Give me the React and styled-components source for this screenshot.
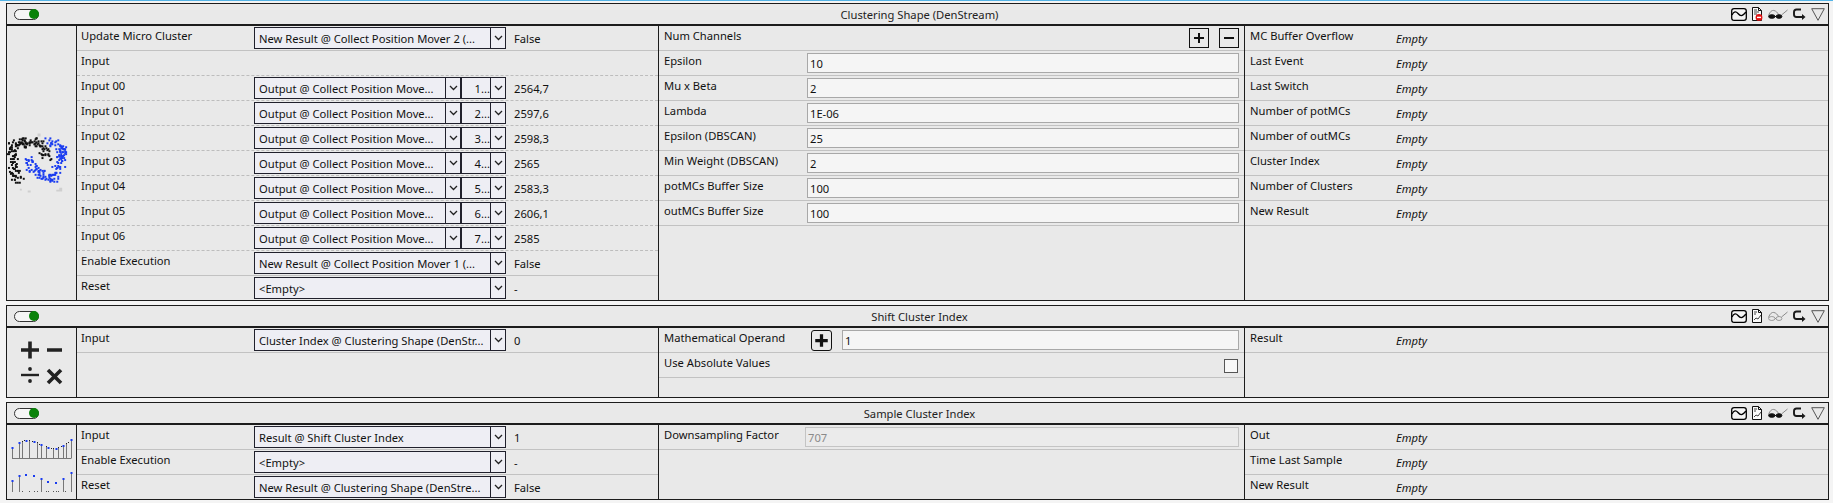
import React from 'react';
import styled, { createGlobalStyle } from 'styled-components';

const GlobalStyle = createGlobalStyle`
  html, body {
    margin: 0;
    padding: 0;
    background: #f4f4f4;
    font-family: "Noto Sans", "Liberation Sans", sans-serif;
    font-size: 11.2px;
    color: #111;
  }
`;

const Page = styled.div`
  width: 1833px;
  height: 503px;
  overflow: hidden;
  border-top: 1px solid #55b4e6;
  box-sizing: border-box;
  padding: 2px 5px 0 6px;
`;

const Panel = styled.section`
  width: 1823px;
  box-sizing: border-box;
  border: 1px solid #1c1c1c;
  background: #e9e9e9;
  margin-bottom: 4px;
`;

const PanelHeader = styled.header`
  height: 20px;
  border-bottom: 2px solid #1c1c1c;
  display: grid;
  grid-template-columns: 1fr auto 1fr;
  align-items: center;
  padding: 0 3px 0 7px;
`;

const Toggle = styled.span`
  width: 25px;
  height: 11px;
  box-sizing: border-box;
  border: 1px solid #333;
  border-radius: 6px;
  background: #f6f6f6;
  display: flex;
  justify-content: flex-end;
  align-items: center;
  &::after {
    content: '';
    width: 10px;
    height: 10px;
    margin-right: -1px;
    border-radius: 50%;
    background: #0a820a;
  }
`;

const Title = styled.span`
  color: #222;
`;

const HeaderIcons = styled.div`
  display: flex;
  justify-content: flex-end;
  align-items: center;
  gap: 5px;
`;

const Body = styled.div`
  display: grid;
  grid-template-columns: 70px 582px 586px 583px;
  height: ${p => p.$height}px;
  overflow: hidden;
`;

const IconCell = styled.div`
  border-right: 1px solid #1c1c1c;
  display: flex;
  align-items: center;
  justify-content: center;
`;

const Column = styled.div`
  border-right: ${p => (p.$last ? 'none' : '1px solid #1c1c1c')};
`;

const Row = styled.div`
  height: 25px;
  box-sizing: border-box;
  border-bottom: 1px ${p => p.$line || 'solid'} ${p => (p.$line === 'dashed' ? '#bdbdbd' : '#c2c2c2')};
  display: flex;
  align-items: flex-start;
  padding-left: ${p => p.$inset || 4}px;
`;

const Label = styled.span`
  flex: none;
  width: ${p => p.$width}px;
  line-height: 16px;
  margin-top: 2px;
  white-space: nowrap;
`;

const SelectBox = styled.div`
  width: ${p => p.$width}px;
  height: 22px;
  margin-top: 1px;
  box-sizing: border-box;
  flex: none;
  border: 1px solid #20202c;
  background: #eeeef4;
  display: flex;
  align-items: center;
`;

const SelectText = styled.span`
  flex: 1;
  min-width: 0;
  padding: 0 ${p => (p.$right ? '0' : '4px')};
  text-align: ${p => (p.$right ? 'right' : 'left')};
  white-space: nowrap;
  overflow: hidden;
`;

const SelectArrow = styled.span`
  flex: none;
  width: 14px;
  height: 20px;
  border-left: 1px solid #20202c;
  display: flex;
  align-items: center;
  justify-content: center;
`;

const Value = styled.span`
  line-height: 16px;
  margin: 5px 0 0 8px;
`;

const EmptyValue = styled.span`
  line-height: 16px;
  margin-top: 5px;
  font-style: italic;
`;

const TextInput = styled.div`
  flex: 1;
  height: 20px;
  margin: 2px 5px 0 0;
  box-sizing: border-box;
  border: 1px solid ${p => (p.$disabled ? '#c4c4c4' : '#a8a8a8')};
  background: ${p => (p.$disabled ? '#ebebeb' : '#f5f5f5')};
  color: ${p => (p.$disabled ? '#8a8a8a' : '#111')};
  padding: 1px 2px 0;
  line-height: 17px;
`;

const SquareButton = styled.span`
  flex: none;
  width: ${p => (p.$round ? 21 : 20)}px;
  height: ${p => (p.$round ? 21 : 20)}px;
  box-sizing: border-box;
  border: 1px solid #111;
  border-radius: ${p => (p.$round ? 3 : 0)}px;
  display: flex;
  align-items: center;
  justify-content: center;
  margin: ${p => (p.$round ? '2px 10px 0 4px' : '2px 0 0 0')};
`;

const ButtonGroup = styled.div`
  display: flex;
  gap: 10px;
  margin: 0 5px 0 auto;
`;

const Checkbox = styled.span`
  width: 14px;
  height: 14px;
  box-sizing: border-box;
  border: 1px solid #555;
  background: #f8f8f8;
  margin: 6px 6px 0 auto;
`;

// --- drawings ---

const Chevron = () => (
  <svg width="9" height="6" viewBox="0 0 9 6">
    <path d="M1 1l3.5 3.5L8 1" fill="none" stroke="#222" strokeWidth="1.3" />
  </svg>
);

const Glyph = ({ minus, size = 12, width = 2 }) => (
  <svg width={size} height={size} viewBox="0 0 12 12">
    <path d={minus ? 'M1 6h10' : 'M1 6h10M6 1v10'} stroke="#111" strokeWidth={width} />
  </svg>
);

const WaveIcon = () => (
  <svg width="16" height="13" viewBox="0 0 16 13">
    <rect x="0.7" y="0.7" width="14.6" height="11.6" rx="2.4" fill="#f4f4f4" stroke="#000" strokeWidth="1.3" />
    <path d="M1 7c2-4 4-4 6-1.5s4 3.500 8-1.500" fill="none" stroke="#000" strokeWidth="1.3" />
  </svg>
);

const DocIcon = ({ stop }) => (
  <svg width="11" height="14" viewBox="0 0 11 14">
    <path d="M.5.5h6l3 3v10h-9z" fill="#fafafa" stroke="#111" />
    <path d="M6.5.5v3h3" fill="none" stroke="#111" />
    {stop ? (
      <>
        <path d="M2 3h3M2 5h5M2 7h3" stroke="#444" />
        <circle cx="7" cy="10.4" r="3.4" fill="#e01010" />
        <path d="M5 10.4h4" stroke="#fff" strokeWidth="1.4" />
      </>
    ) : (
      <>
        <path d="M2 3h3M2 5h2" stroke="#444" />
        <path d="M2 11l2-2 2 1 3-4" fill="none" stroke="#444" />
      </>
    )}
  </svg>
);

const GlassesIcon = ({ dark }) => {
  const lens = dark ? '#111' : '#8a8a8a';
  return (
    <svg width="20" height="10" viewBox="0 0 20 10">
      <path d="M.5 6.500C2 2.500 4 1 6 1.500s3.500 2 4.500 4M13.500 6l6-5" fill="none" stroke="#8a8a8a" />
      <path d="M7 7.500h1" stroke={lens} />
      <ellipse cx="3.800" cy="7.500" rx="3.200" ry={dark ? 1.800 : 2} fill={dark ? lens : 'none'} stroke={lens} strokeWidth={dark ? 1 : 0.8} />
      <ellipse cx="11" cy="7.500" rx="2.900" ry={dark ? 1.800 : 2} fill={dark ? lens : 'none'} stroke={lens} strokeWidth={dark ? 1 : 0.8} />
    </svg>
  );
};

const ReturnIcon = () => (
  <svg width="13" height="13" viewBox="0 0 13 13">
    <path d="M8 1.500H3.500Q1 1.500 1 4v2.500Q1 9 3.500 9H9.500" fill="none" stroke="#1a1a1a" strokeWidth="1.900" />
    <path d="M9 6l3.500 3L9 12z" fill="#1a1a1a" />
  </svg>
);

const TriangleIcon = () => (
  <svg width="14" height="13" viewBox="0 0 14 13">
    <path d="M.7.7h12.600L7 12.300z" fill="none" stroke="#555" />
  </svg>
);

// seeded so the specks stay the same on every render
const scatter = (points, count, spread, seed) => {
  let s = seed;
  const rnd = () => {
    s = (s * 16807) % 2147483647;
    return s / 2147483647;
  };
  const out = [];
  for (let i = 0; i < count; i++) {
    const t = (i / count) * (points.length - 1);
    const k = Math.floor(t);
    const f = t - k;
    const [ax, ay] = points[k];
    const [bx, by] = points[k + 1];
    out.push([
      Math.round(ax + (bx - ax) * f + (rnd() - 0.5) * spread),
      Math.round(ay + (by - ay) * f + (rnd() - 0.5) * spread),
    ]);
  }
  return out;
};

const blackDots = scatter(
  [[13, 50], [7, 42], [3, 25], [7, 15], [16, 12], [25, 12], [35, 17], [40, 27]],
  150, 10, 77
);
const blueDots = scatter(
  [[43, 10], [53, 17], [56, 25], [53, 35], [46, 49], [35, 45], [25, 39], [21, 29]],
  150, 10, 1234
);

const ClusterIcon = () => (
  <svg width="70" height="70" viewBox="0 0 70 70">
    {blackDots.map(([x, y], i) => <rect key={i} x={x} y={y} width="2" height="2" fill="#111" />)}
    {blueDots.map(([x, y], i) => <rect key={i} x={x} y={y} width="2" height="2" fill="#1a3cf0" />)}
    <path d="M31 4h3v3h-3zM13 60h2v2h-2zM21 62h3v2h-3zM50 61h3v2h-3zM53 59h3v4h-3z" fill="#cfcfcf" />
  </svg>
);

const MathIcon = () => (
  <svg width="69" height="69" viewBox="0 0 69 69">
    <path d="M14 22h18M23 13.500v17M40 22h15" stroke="#222" strokeWidth="3.600" />
    <path d="M14 47h18" stroke="#222" strokeWidth="2.400" />
    <circle cx="23" cy="41" r="1.900" fill="#222" />
    <circle cx="23" cy="53" r="1.900" fill="#222" />
    <path d="M41 42l13 13M54 42L41 55" stroke="#222" strokeWidth="3.600" />
  </svg>
);

const topStems = [[5, 22], [12, 17], [15, 16], [22, 15], [30, 17], [34, 19], [39, 21], [46, 23], [51, 22], [56, 20], [59, 18], [64, 14]];
const topBlue = [[5, 22], [12, 17], [19, 15], [27, 16], [34, 19], [41, 22], [49, 23], [56, 20], [64, 14]];
const topBlack = [[15, 16], [17, 15], [22, 15], [25, 16], [30, 17], [32, 19], [39, 21], [44, 23], [46, 23], [51, 22], [54, 21], [59, 18], [61, 17]];
const lowStems = [[5, 55], [12, 50], [34, 53], [56, 53], [64, 47]];
const lowBlue = [[19, 49], [27, 50], [41, 56], [49, 57]];

const SampleIcon = () => (
  <svg width="69" height="74" viewBox="0 0 69 74">
    <path d="M5 32.500h59.500" stroke="#777" />
    {topStems.map(([x, y]) => <path key={x} d={`M${x + 0.5} ${y}V32`} stroke="#777" />)}
    {topBlack.map(([x, y]) => <rect key={x} x={x} y={y - 1} width="1" height="1" fill="#222" />)}
    {topBlue.map(([x, y]) => <rect key={x} x={x - 0.5} y={y - 1} width="2" height="2" fill="#1a3cf0" />)}
    {lowStems.map(([x, y]) => (
      <g key={x}>
        <path d={`M${x + 0.5} ${y}V66`} stroke="#777" />
        <rect x={x - 0.5} y={y - 1} width="2" height="2" fill="#1a3cf0" />
      </g>
    ))}
    {lowBlue.map(([x, y]) => <rect key={x} x={x - 1} y={y - 1} width="2" height="2" fill="#1a3cf0" />)}
    {[15, 22, 27, 30, 39, 41, 46, 49, 51, 58].map(x => <rect key={x} x={x} y="65" width="1" height="1" fill="#555" />)}
  </svg>
);

// --- parts ---

const Select = ({ width = 252, right, children }) => (
  <SelectBox $width={width}>
    <SelectText $right={right}>{children}</SelectText>
    <SelectArrow><Chevron /></SelectArrow>
  </SelectBox>
);

const Header = ({ title, stop, darkGlasses }) => (
  <PanelHeader>
    <Toggle />
    <Title>{title}</Title>
    <HeaderIcons>
      <WaveIcon />
      <DocIcon stop={stop} />
      <GlassesIcon dark={darkGlasses} />
      <ReturnIcon />
      <TriangleIcon />
    </HeaderIcons>
  </PanelHeader>
);

const InputRow = ({ label, source, value, line }) => (
  <Row $line={line}>
    <Label $width={173}>{label}</Label>
    <Select>{source}</Select>
    <Value>{value}</Value>
  </Row>
);

const ChannelRow = ({ index, value }) => (
  <Row $line="dashed">
    <Label $width={173}>Input 0{index}</Label>
    <Select width={207}>Output @ Collect Position Move...</Select>
    <Select width={45} right>{index + 1}...</Select>
    <Value>{value}</Value>
  </Row>
);

const ParamRow = ({ label, value }) => (
  <Row $inset={5}>
    <Label $width={143}>{label}</Label>
    <TextInput>{value}</TextInput>
  </Row>
);

const OutputRow = ({ label }) => (
  <Row $inset={5}>
    <Label $width={146}>{label}</Label>
    <EmptyValue>Empty</EmptyValue>
  </Row>
);

const channels = ['2564,7', '2597,6', '2598,3', '2565', '2583,3', '2606,1', '2585'];
const params = [
  ['Epsilon', '10'],
  ['Mu x Beta', '2'],
  ['Lambda', '1E-06'],
  ['Epsilon (DBSCAN)', '25'],
  ['Min Weight (DBSCAN)', '2'],
  ['potMCs Buffer Size', '100'],
  ['outMCs Buffer Size', '100'],
];
const clusterOutputs = ['MC Buffer Overflow', 'Last Event', 'Last Switch', 'Number of potMCs', 'Number of outMCs', 'Cluster Index', 'Number of Clusters', 'New Result'];

const App = () => (
  <Page>
    <GlobalStyle />

    <Panel>
      <Header title="Clustering Shape (DenStream)" stop darkGlasses />
      <Body $height={274}>
        <IconCell><ClusterIcon /></IconCell>
        <Column>
          <InputRow label="Update Micro Cluster" source="New Result @ Collect Position Mover 2 (..." value="False" />
          <Row $line="dashed"><Label $width={173}>Input</Label></Row>
          {channels.map((value, i) => <ChannelRow key={i} index={i} value={value} />)}
          <InputRow label="Enable Execution" source="New Result @ Collect Position Mover 1 (..." value="False" />
          <InputRow label="Reset" source="<Empty>" value="-" line="none" />
        </Column>
        <Column>
          <Row $inset={5}>
            <Label $width={143}>Num Channels</Label>
            <ButtonGroup>
              <SquareButton><Glyph /></SquareButton>
              <SquareButton><Glyph minus /></SquareButton>
            </ButtonGroup>
          </Row>
          {params.map(([label, value]) => <ParamRow key={label} label={label} value={value} />)}
        </Column>
        <Column $last>
          {clusterOutputs.map(label => <OutputRow key={label} label={label} />)}
        </Column>
      </Body>
    </Panel>

    <Panel>
      <Header title="Shift Cluster Index" />
      <Body $height={69}>
        <IconCell><MathIcon /></IconCell>
        <Column>
          <InputRow label="Input" source="Cluster Index @ Clustering Shape (DenStr..." value="0" />
        </Column>
        <Column>
          <Row $inset={5}>
            <Label $width={143}>Mathematical Operand</Label>
            <SquareButton $round><Glyph size={15} width={2.6} /></SquareButton>
            <TextInput>1</TextInput>
          </Row>
          <Row $inset={5}>
            <Label $width={143}>Use Absolute Values</Label>
            <Checkbox />
          </Row>
        </Column>
        <Column $last>
          <OutputRow label="Result" />
        </Column>
      </Body>
    </Panel>

    <Panel>
      <Header title="Sample Cluster Index" darkGlasses />
      <Body $height={74}>
        <IconCell><SampleIcon /></IconCell>
        <Column>
          <InputRow label="Input" source="Result @ Shift Cluster Index" value="1" />
          <InputRow label="Enable Execution" source="<Empty>" value="-" />
          <InputRow label="Reset" source="New Result @ Clustering Shape (DenStre..." value="False" line="none" />
        </Column>
        <Column>
          <Row $inset={5}>
            <Label $width={141}>Downsampling Factor</Label>
            <TextInput $disabled>707</TextInput>
          </Row>
        </Column>
        <Column $last>
          <OutputRow label="Out" />
          <OutputRow label="Time Last Sample" />
          <OutputRow label="New Result" />
        </Column>
      </Body>
    </Panel>
  </Page>
);

export default App;
